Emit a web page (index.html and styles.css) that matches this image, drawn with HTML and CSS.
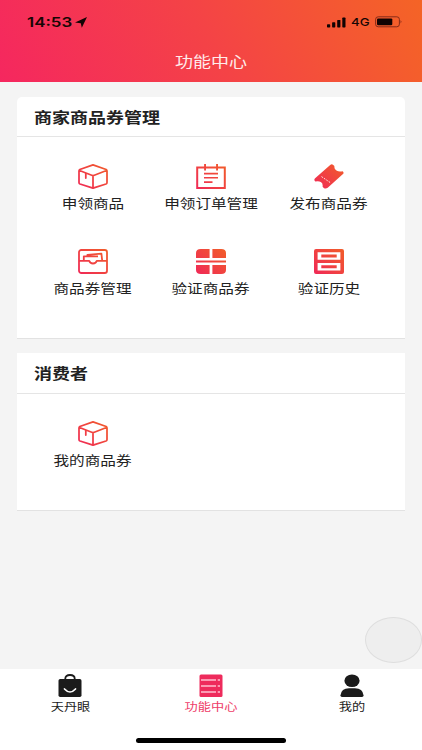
FILE: index.html
```html
<!DOCTYPE html>
<html lang="zh-CN">
<head>
<meta charset="utf-8">
<meta name="viewport" content="width=device-width, initial-scale=1">
<title>功能中心</title>
<link rel="stylesheet" href="styles.css">
</head>
<body>
<svg class="defs" width="0" height="0" aria-hidden="true">
  <defs>
    <linearGradient id="warm" gradientUnits="userSpaceOnUse" x1="3" y1="25" x2="26" y2="0">
      <stop offset="0" stop-color="#f02b55"/><stop offset="1" stop-color="#f15a2c"/>
    </linearGradient>
    <symbol id="box" viewBox="0 0 30 25">
      <path d="M15 .9 28.2 5.5Q29 6 29 7V18.5Q29 19.6 28 20L15 24.2 2 20Q1 19.6 1 18.5V7Q1 6 1.8 5.5ZM1.5 6.5 15 11.7 28.5 6.5M15 11.7V24M7.8 9.3V14" fill="none" stroke="url(#warm)" stroke-width="1.75" stroke-linejoin="round" stroke-linecap="round"/>
    </symbol>
  </defs>
</svg>
<div class="phone">
  <header class="top">
    <div class="status">
      <div class="clock"><span class="wide">14:53</span>
        <svg width="12" height="11" viewBox="0 0 12 11"><path d="M12 0 6.8 10.8 5.8 6.2 0 5.4Z"/></svg>
      </div>
      <div class="signals">
        <svg width="19" height="11" viewBox="0 0 19 11"><rect y="7.2" width="3.2" height="3.3" rx=".7"/><rect x="5.1" y="5.2" width="3.2" height="5.3" rx=".7"/><rect x="10.2" y="2.9" width="3.2" height="7.6" rx=".7"/><rect x="15.3" y=".5" width="3.2" height="10" rx=".7"/></svg>
        <span class="network wide">4G</span>
        <svg width="28" height="12" viewBox="0 0 28 12"><rect x=".6" y=".8" width="23.8" height="10" rx="2.6" fill="none" stroke="#7a2516" stroke-width=".9"/><rect x="2" y="2.4" width="15.3" height="6.8" rx="1.2"/><path d="M25.6 4Q27.4 5.8 25.6 7.6Z" fill="#7a2516"/></svg>
      </div>
    </div>
    <h1 class="title"><span class="wide">功能中心</span></h1>
  </header>

  <main class="content">
    <section class="card card-merchant">
      <h2 class="card-title"><span class="wide">商家商品券管理</span></h2>
      <div class="grid">
        <div class="item"><svg class="icon"><use href="#box"/></svg><span class="label wide">申领商品</span></div>
        <div class="item">
          <svg class="icon" viewBox="0 0 30 25"><path d="M1.2 3.5H28.8V24H1.2Z" fill="none" stroke="url(#warm)" stroke-width="2"/><path d="M8.1 0H10V6.5H8.1ZM20.1 0H22V6.5H20.1ZM8 8.7H22V10.4H8ZM8 12.9H22V14.6H8ZM8 17.2H16.5V18.9H8Z" fill="url(#warm)"/></svg>
          <span class="label wide">申领订单管理</span>
        </div>
        <div class="item">
          <svg class="icon" viewBox="0 0 30 25"><path d="M16.2 1Q17.7-.2 19.2.9L20.4 2Q20 5.7 22.8 6.8Q25.2 8.1 28.6 7.2L29.3 8.1Q30 9.3 28.7 10.3L13.7 23.8Q11.7 25.3 9.8 24L8.6 22.8Q9.1 19.1 6.8 18.1Q4.7 16.8 1.3 17.6L.5 16.5Q0 15.3 1.1 14.2Z" fill="url(#warm)"/><path d="m7.5 12.6 8.8 6" stroke="#ffe9e6" stroke-width="1" stroke-dasharray="1.7 1.2"/></svg>
          <span class="label wide">发布商品券</span>
        </div>
        <div class="item">
          <svg class="icon" viewBox="0 0 30 25"><g fill="none" stroke="url(#warm)" stroke-width="1.8" stroke-linejoin="round"><rect x="1" y="1" width="28" height="23" rx="2.3"/><path d="M1 11.8H11.2Q12 14.5 15 14.5T18.8 11.8H29M5.8 11.5V7.3H20M9.4 7.2V5.9L23.4 4.7 24.2 11.5"/></g></svg>
          <span class="label wide">商品券管理</span>
        </div>
        <div class="item">
          <svg class="icon" viewBox="0 0 30 25"><path d="M13.6 0V9H0V4Q0 0 4.8 0ZM16.4 0H25.2Q30 0 30 4V9H16.4ZM0 11.4H30V13.4H0ZM0 16H13.6V25H4.8Q0 25 0 21ZM16.4 16H30V21Q30 25 25.2 25H16.4Z" fill="url(#warm)"/></svg>
          <span class="label wide">验证商品券</span>
        </div>
        <div class="item">
          <svg class="icon" viewBox="0 0 30 25"><path fill-rule="evenodd" d="M2 0H28Q30 0 30 2V23Q30 25 28 25H2Q0 25 0 23V2Q0 0 2 0ZM3.6 3.3V10.7H26.4V3.3ZM3.6 14.1V21.6H26.4V14.1ZM7.3 5.4H22.7V8.4H7.3ZM7.3 16.3H22.7V19.3H7.3Z" fill="url(#warm)"/></svg>
          <span class="label wide">验证历史</span>
        </div>
      </div>
    </section>

    <section class="card card-consumer">
      <h2 class="card-title"><span class="wide">消费者</span></h2>
      <div class="grid">
        <div class="item"><svg class="icon"><use href="#box"/></svg><span class="label wide">我的商品券</span></div>
      </div>
    </section>
  </main>

  <footer class="bottom">
    <nav class="tabs">
      <div class="tab">
        <svg width="24" height="23" viewBox="0 0 24 23"><path d="M7.3 6V4.6Q7.3 1 12 1T16.7 4.6V6" fill="none" stroke="#1b1b1b" stroke-width="1.8"/><rect x=".5" y="5" width="23" height="18" rx="1.7" fill="#1b1b1b"/><path d="M6.5 15Q12 21 17.5 15" fill="none" stroke="#fff" stroke-width="1.7" stroke-linecap="round"/></svg>
        <span class="tab-label wide">天丹眼</span>
      </div>
      <div class="tab tab-active">
        <svg width="24" height="23" viewBox="0 0 24 23"><rect x=".5" y=".5" width="23" height="22.5" rx="1.5" fill="#ee2b5c"/><path d="M2 6H17M18.7 6H21M2 12H17M18.7 12H21M2 18H17M18.7 18H21" stroke="#ffc0cf" stroke-width="1.6"/></svg>
        <span class="tab-label wide">功能中心</span>
      </div>
      <div class="tab">
        <svg width="24" height="23" viewBox="0 0 24 23"><ellipse cx="12" cy="6.8" rx="7.6" ry="6.3"/><path d="M.5 21.2Q1.3 14.2 9 14.2H15Q22.7 14.2 23.5 21.2 23.6 23 22 23H2Q.4 23 .5 21.2Z"/></svg>
        <span class="tab-label wide">我的</span>
      </div>
    </nav>
    <div class="home-bar"></div>
  </footer>
  <div class="float-button"></div>
</div>
</body>
</html>
```
FILE: styles.css
```css
* { box-sizing: border-box; }

body {
  margin: 0;
  font-family: "Noto Sans CJK SC", sans-serif;
  color: #222;
}

.defs { position: absolute; }

.phone {
  position: relative;
  display: flex;
  flex-direction: column;
  width: 422px;
  height: 750px;
  overflow: hidden;
  background: #f4f4f4;
}

svg { display: block; flex: none; }

/* Extended letterforms, stretched around their own centre */
.wide {
  display: inline-block;
  white-space: nowrap;
  transform: scaleX(1.2);
}

.top {
  height: 82px;
  flex: none;
  background: linear-gradient(62deg, #f5275f 0%, #f44346 50%, #f46426 100%);
}

.status {
  display: flex;
  justify-content: space-between;
  height: 44px;
  padding: 0 19px 0 27px;
  align-items: center;
  color: #160604;
  fill: #110303;
}

.clock {
  display: flex;
  align-items: center;
  gap: 3px;
  font: 600 13px/16px Inter, sans-serif;
}

.clock .wide { width: 45px; transform-origin: left; transform: scaleX(1.3); }

.signals { display: flex; align-items: center; gap: 5px; }

.network {
  width: 19px;
  font: 500 11px/14px Inter, sans-serif;
  transform-origin: left;
}

.title {
  margin: 0;
  color: #ffeceb;
  font-size: 15px;
  font-weight: 400;
  line-height: 34px;
  text-align: center;
}

.content {
  display: flex;
  flex-direction: column;
  flex: 1;
  gap: 14px;
  padding: 15px 17px 0;
}

.card {
  background: #fff;
  border-bottom: 1px solid #e2e2e2;
}

.card-merchant { height: 242px; border-radius: 5px 5px 0 0; }
.card-consumer { height: 158px; }

.card-title {
  height: 40px;
  margin: 0;
  padding-left: 17px;
  border-bottom: 1px solid #e5e5e5;
  font-size: 15px;
  font-weight: 700;
  line-height: 39px;
}

.card-title .wide { transform-origin: left; }
.card-consumer .card-title { height: 41px; line-height: 40px; }

.grid {
  display: grid;
  grid-template-columns: repeat(3, 1fr);
  grid-auto-rows: 85px;
  padding: 27px 17px 0;
}

.item { display: flex; flex-direction: column; align-items: center; }
.icon { width: 30px; height: 25px; }

.label {
  margin-top: 4px;
  font-size: 13px;
  font-weight: 400;
  line-height: 20px;
}

.bottom {
  height: 81px;
  flex: none;
  padding-top: 5px;
  background: #fff;
}

.tabs { display: flex; height: 64px; }
.tab { display: flex; flex: 1; flex-direction: column; align-items: center; color: #1b1b1b; fill: #1b1b1b; }
.tab-active { color: #ee3c68; }
.tab-label { margin-top: 1px; font-size: 11px; line-height: 16px; }

.home-bar {
  width: 150px;
  height: 5px;
  margin: 0 auto;
  border-radius: 3px;
  background: #000;
}

/* Floating control over the page */
.float-button {
  position: absolute;
  top: 617px;
  left: 365px;
  width: 57px;
  height: 46px;
  border: 1px solid #dedede;
  border-radius: 50%;
  background: #eee;
}
```
